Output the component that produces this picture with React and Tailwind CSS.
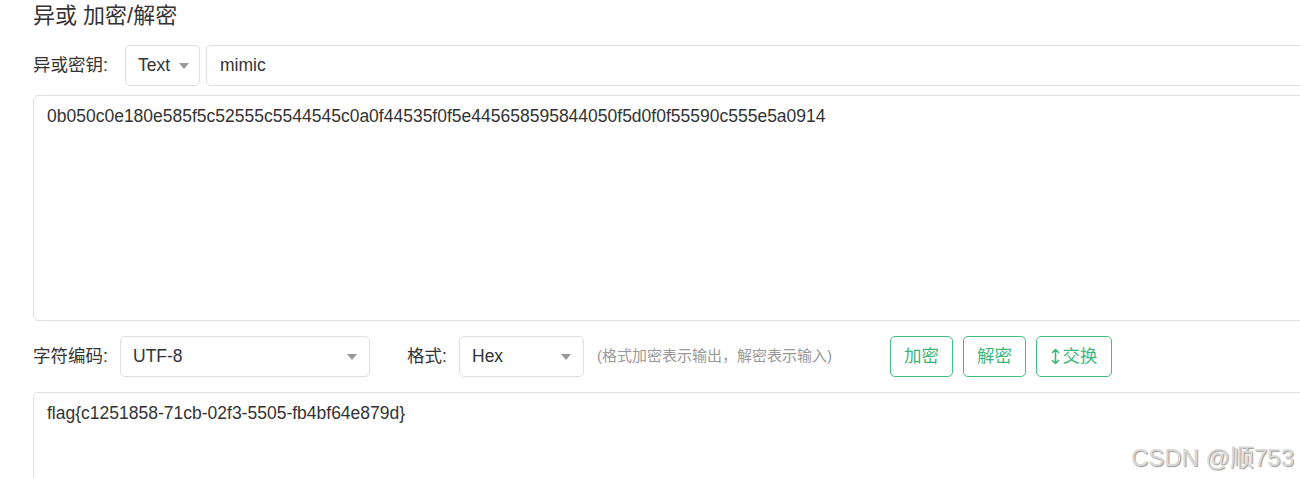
const font = { fontFamily: '"Liberation Sans", Arial, "Noto Sans CJK SC", sans-serif' };

function Caret() {
  return <span className="w-0 h-0 border-l-[5px] border-r-[5px] border-t-[6px] border-l-transparent border-r-transparent border-t-[#999]" />;
}

export default function App() {
  return (
    <div className="relative w-[1300px] h-[478px] overflow-hidden bg-white text-[#333]" style={font}>
      <div className="pl-[33px] w-[1340px]">
        <h1 className="text-[22px] leading-[32px] text-[#333]">异或 加密/解密</h1>

        <div className="flex items-center mt-[13px] h-[41px]">
          <span className="text-[17.5px] w-[92px]">异或密钥:</span>
          <div className="flex items-center justify-between w-[75px] h-[41px] pl-3 pr-[10px] border border-[#dcdfe6] rounded-[5px] text-[17.5px]">
            <span>Text</span>
            <Caret />
          </div>
          <div className="flex-1 ml-[6px] h-[41px] flex items-center px-[13px] border border-[#dcdfe6] rounded-[5px] text-[17.5px]">mimic</div>
        </div>

        <div className="mt-[9px] h-[226px] border border-[#dcdfe6] rounded-[5px] px-[13px] pt-[7px] text-[17.5px] break-all">
          0b050c0e180e585f5c52555c5544545c0a0f44535f0f5e445658595844050f5d0f0f55590c555e5a0914
        </div>

        <div className="flex items-center mt-[15px] h-[41px]">
          <span className="text-[17.5px] w-[87px]">字符编码:</span>
          <div className="flex items-center justify-between w-[250px] h-[41px] px-3 border border-[#dcdfe6] rounded-[5px] text-[17.5px]">
            <span>UTF-8</span>
            <Caret />
          </div>
          <span className="text-[17.5px] ml-[37px] w-[52px]">格式:</span>
          <div className="flex items-center justify-between w-[125px] h-[41px] px-3 border border-[#dcdfe6] rounded-[5px] text-[17.5px]">
            <span>Hex</span>
            <Caret />
          </div>
          <span className="ml-[13px] text-[15px] text-[#999] w-[293px]">(格式加密表示输出，解密表示输入)</span>
          <div className="flex gap-[10px]">
            <button className="w-[63px] h-[41px] border border-[#3fbf80] text-[#3fb57a] rounded-[5px] text-[17.5px]">加密</button>
            <button className="w-[63px] h-[41px] border border-[#3fbf80] text-[#3fb57a] rounded-[5px] text-[17.5px]">解密</button>
            <button className="w-[76px] h-[41px] border border-[#3fbf80] text-[#3fb57a] rounded-[5px] text-[17.5px] flex items-center justify-center gap-[3px]">
              <svg width="9" height="17" viewBox="0 0 9 17" fill="none" stroke="currentColor" strokeWidth="1.6" strokeLinecap="round" strokeLinejoin="round">
                <path d="M4.5 1.5v14M1.5 4.5l3-3 3 3M1.5 12.5l3 3 3-3" />
              </svg>
              交换
            </button>
          </div>
        </div>

        <div className="mt-[15px] h-[120px] border border-[#dcdfe6] rounded-[5px] px-[13px] pt-[7px] text-[17.5px]">
          flag{"{"}c1251858-71cb-02f3-5505-fb4bf64e879d{"}"}
        </div>
      </div>

      <div className="absolute right-[6px] top-[440px] text-[24px] text-[#d9d9d9] [text-shadow:1px_1px_1px_#999]">CSDN @顺753</div>
    </div>
  );
}
